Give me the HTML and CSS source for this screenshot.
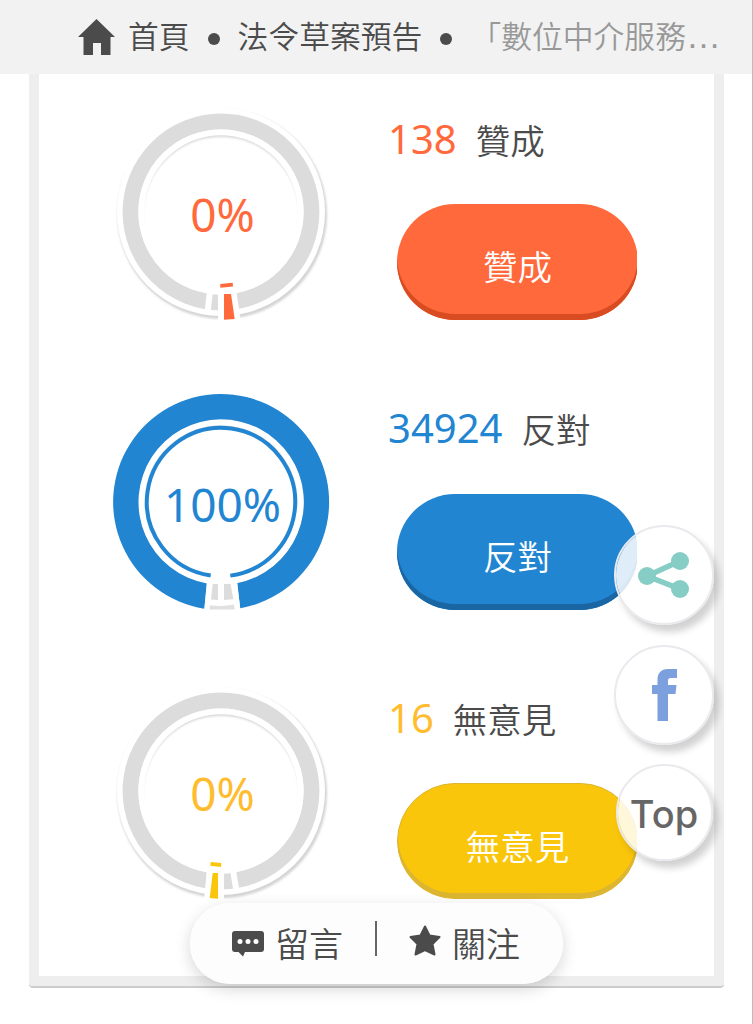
FILE: index.html
```html
<!DOCTYPE html>
<html lang="zh-Hant">

<head>
  <meta charset="UTF-8">
  <meta name="viewport" content="width=device-width, initial-scale=1.0">
  <title>法令草案預告</title>
  <link rel="stylesheet" href="styles.css">
</head>

<body>
  <!-- Shared chart parts -->
  <svg class="defs" width="0" height="0" aria-hidden="true">
    <defs>
      <filter id="soft" x="-10%" y="-10%" width="120%" height="120%">
        <feGaussianBlur stdDeviation="1" />
      </filter>
      <g id="ring">
        <circle cx="1.2" cy="2.2" r="104.8" fill="#d4d4d4" filter="url(#soft)" />
        <circle r="104" fill="#fff" />
        <circle r="90.5" fill="none" stroke="#dcdcdc" stroke-width="15.8" />
        <circle r="76.8" fill="#d6d6d6" />
        <circle cy="2.8" r="78" fill="#fff" filter="url(#soft)" />
        <circle r="79.800" fill="none" stroke="#fff" stroke-width="5.600" />
      </g>
    </defs>
  </svg>

  <!-- Breadcrumb -->
  <nav class="breadcrumb">
    <svg class="home-icon" viewBox="0 0 37 36"><path d="M18.5 0 37 18H32.5V36H23V24H15V36H5.500V18H0Z" /></svg>
    <span class="crumb">首頁</span>
    <i class="dot"></i>
    <span class="crumb">法令草案預告</span>
    <i class="dot"></i>
    <span class="crumb current">「數位中介服務<span class="more">…</span></span>
  </nav>

  <!-- Poll results -->
  <main class="card">
    <section class="vote agree">
      <div class="chart">
        <svg viewBox="-112 -108 224 216">
          <use href="#ring" />
          <path d="M-11.300 81-13.300 99" stroke="#fff" stroke-width="6" />
          <path d="M-3 77H15L20 110H-3Z" fill="#fff" />
          <path class="slice" d="M3 82H10L13.700 107 3 107.700ZM-.7 72 11.700 70.700 12 74.400-.7 75.700Z" />
        </svg>
        <span class="percent">0%</span>
      </div>
      <div class="info">
        <p class="count"><b>138</b><span>贊成</span></p>
        <div class="button-wrap"><button>贊成</button></div>
      </div>
    </section>

    <section class="vote oppose">
      <div class="chart">
        <svg viewBox="-112 -108 224 216">
          <use href="#ring" />
          <path class="slice" d="M-16.700 106.700A108 108 0 1 1 19.300 106.300L16 81.200A82.700 82.700 0 1 0-14 81.500Z" />
          <circle r="74.200" class="slice-line" stroke-dasharray="445.700 20.500" transform="rotate(98)" />
          <path d="M-14 78H16L19.300 108H-16.700Z" fill="#fff" />
          <path d="M-8.300 82H-3V98L-10 97.500ZM3 82H9.500L12.300 97.300 3 98Z" fill="#dcdcdc" />
          <path d="M-11 103.300Q2 104.800 13 102.500L13.700 107.500H-11.500Z" fill="#e0e0e0" />
        </svg>
        <span class="percent">100%</span>
      </div>
      <div class="info">
        <p class="count"><b>34924</b><span>反對</span></p>
        <div class="button-wrap"><button>反對</button></div>
      </div>
    </section>

    <section class="vote neutral">
      <div class="chart">
        <svg viewBox="-112 -108 224 216">
          <use href="#ring" />
          <path d="M12.300 81 15.300 99" stroke="#fff" stroke-width="6" />
          <path d="M3 77H-14L-17 110H3Z" fill="#fff" />
          <path class="slice" d="M-3 82H-8.300L-11.300 107-3 107.700ZM-10.300 71 .3 72 0 76-10.700 74.700Z" />
        </svg>
        <span class="percent">0%</span>
      </div>
      <div class="info">
        <p class="count"><b>16</b><span>無意見</span></p>
        <div class="button-wrap"><button>無意見</button></div>
      </div>
    </section>
  </main>

  <!-- Floating share buttons -->
  <aside class="floating">
    <a class="round">
      <svg class="share-icon" viewBox="0 0 51 46"><path d="M42 9 9 24 42 37" fill="none" stroke="#86cdc5" stroke-width="5.500" /><g fill="#86cdc5"><circle cx="42" cy="9" r="9" /><circle cx="9" cy="24" r="9" /><circle cx="42" cy="37" r="9" /></g></svg>
    </a>
    <a class="round">
      <svg class="facebook-icon" viewBox="0 0 25 52"><path d="M5.500 52V25H0V16H5.500V11C5.500 4 9 0 16 0H25V9H19C16.500 9 16 10 16 12V16H24.500L23.500 25H16V52Z" fill="#7c9fde" /></svg>
    </a>
    <a class="round top">Top</a>
  </aside>

  <!-- Bottom actions -->
  <div class="actions">
    <a class="action">
      <svg width="32" height="26" viewBox="0 0 32 26"><path d="M3 0H29Q32 0 32 3V18Q32 21 29 21H13L11 25.500 6.500 21H3Q0 21 0 18V3Q0 0 3 0Z" /><g fill="#fff"><circle cx="8" cy="10.500" r="2.500" /><circle cx="16" cy="10.500" r="2.500" /><circle cx="24" cy="10.500" r="2.500" /></g></svg>
      <span>留言</span>
    </a>
    <i class="divider"></i>
    <a class="action">
      <svg class="star" width="32" height="31" viewBox="0 0 32 31"><path d="M16 1.500 20.500 10.500 30.500 12 23.500 19 25.500 29.500 16 25 6.500 29.500 8.500 19 1.500 12 11.500 10.500Z" stroke="#4b4b4b" stroke-width="2" stroke-linejoin="round" /></svg>
      <span>關注</span>
    </a>
  </div>
</body>

</html>
```
FILE: styles.css
```css
/* Base */
:root {
  --text-color: #4b4b4b;
  --agree: #ff693c;
  --agree-dark: #d94c22;
  --oppose: #2185d2;
  --oppose-dark: #1a66a3;
  --neutral: #fac60b;
  --neutral-dark: #dcb531;
}

* {
  margin: 0;
  padding: 0;
  box-sizing: border-box;
}

body {
  position: relative;
  height: 1024px;
  overflow: hidden;
  background: #fff;
  border-right: 1px solid #bdbdbd;
  color: var(--text-color);
  font-family: "Noto Sans", "Noto Sans CJK TC", sans-serif;
  font-weight: 350;
}

.defs {
  position: absolute;
}

/* Breadcrumb */
.breadcrumb {
  display: flex;
  align-items: center;
  height: 74px;
  padding-left: 78px;
  background: #f2f2f2;
  font-size: 30.8px;
  line-height: 72px;
  white-space: nowrap;
}

.home-icon {
  width: 37px;
  height: 36px;
  margin-right: 13px;
  fill: var(--text-color);
}

.dot {
  width: 12px;
  height: 12px;
  margin: 4px 18px 0;
  border-radius: 50%;
  background: var(--text-color);
}

.crumb {
  height: 74px;
}

.crumb.current {
  color: #999;
}

.more {
  font-family: "Liberation Sans", sans-serif;
  font-size: 35px;
  line-height: 1;
}

/* Card */
.card {
  width: 695px;
  height: 912px;
  margin-left: 29px;
  padding-top: 30px;
  border: 10px solid #eee;
  border-top: 0;
  border-radius: 0 0 4px 4px;
  box-shadow: 0 2px 0 #ccc;
}

.vote {
  display: flex;
  height: 289.500px;
  padding-left: 70px;
}

.agree {
  --color: var(--agree);
  --number: var(--agree);
  --dark: var(--agree-dark);
}

.oppose {
  --color: var(--oppose);
  --number: var(--oppose);
  --dark: var(--oppose-dark);
}

.neutral {
  --color: var(--neutral);
  --number: #ffbc2e;
  --dark: var(--neutral-dark);
}

.chart {
  display: grid;
  width: 224px;
  height: 216px;
}

.chart svg,
.percent {
  grid-area: 1 / 1;
}

.slice {
  fill: var(--color);
}

.slice-line {
  fill: none;
  stroke: var(--color);
  stroke-width: 4;
}

.percent {
  padding-top: 6px;
  padding-left: 3px;
  color: var(--number);
  font-size: 46px;
  font-weight: 400;
  line-height: 209px;
  text-align: center;
}

.info {
  width: 260px;
  margin-left: 55px;
}

.count {
  display: flex;
  align-items: center;
  height: 68px;
  gap: 19px;
  font-size: 34.500px;
  white-space: nowrap;
}

.count b {
  color: var(--number);
  font-size: 40px;
  font-weight: 400;
}

.count span {
  padding-top: 1px;
}

.button-wrap {
  width: 240px;
  margin: 32px 0 0 9px;
  overflow: hidden;
}

button {
  display: block;
  width: 241px;
  height: 116px;
  padding-top: 6px;
  border: 0;
  border-radius: 58px;
  background: var(--color);
  box-shadow: inset 0 -6px 0 var(--dark);
  color: #fff;
  font: inherit;
  font-size: 34.500px;
}

.neutral button {
  padding-top: 8px;
  border: 1px solid var(--dark);
  box-shadow: inset 0 -5px 0 var(--dark);
}

/* Floating buttons */
.floating {
  position: absolute;
  top: 525px;
  left: 614px;
  display: flex;
  flex-direction: column;
  align-items: center;
  gap: 19.500px;
}

.round {
  display: flex;
  align-items: center;
  justify-content: center;
  width: 100px;
  height: 100px;
  border: 2px solid #e9e9ee;
  border-radius: 50%;
  background: rgba(255, 255, 255, 0.85);
  background-clip: padding-box;
  box-shadow: 5px 7px 7px rgba(0, 0, 0, 0.18);
}

.share-icon {
  width: 51px;
  height: 46px;
  margin-right: 2px;
}

.facebook-icon {
  width: 25px;
  height: 52px;
}

.round.top {
  width: 97px;
  height: 97px;
  padding-top: 3px;
  color: #666;
  font-family: Inter, sans-serif;
  font-size: 38px;
  font-weight: 500;
}

/* Bottom actions */
.actions {
  position: absolute;
  top: 903px;
  left: 190px;
  display: flex;
  align-items: center;
  width: 373px;
  height: 81px;
  padding-left: 42px;
  border-radius: 40px;
  background: rgba(253, 253, 253, 0.98);
  box-shadow: 0 5px 16px rgba(0, 0, 0, 0.16);
  font-size: 34px;
}

.action {
  display: flex;
  align-items: center;
  gap: 11px;
  white-space: nowrap;
}

.action span {
  padding-bottom: 3px;
}

.action svg {
  fill: var(--text-color);
}

.action .star {
  margin-top: -7px;
}

.divider {
  width: 2px;
  height: 35px;
  margin: 0 32px 11px 32px;
  background: #666;
}
```
